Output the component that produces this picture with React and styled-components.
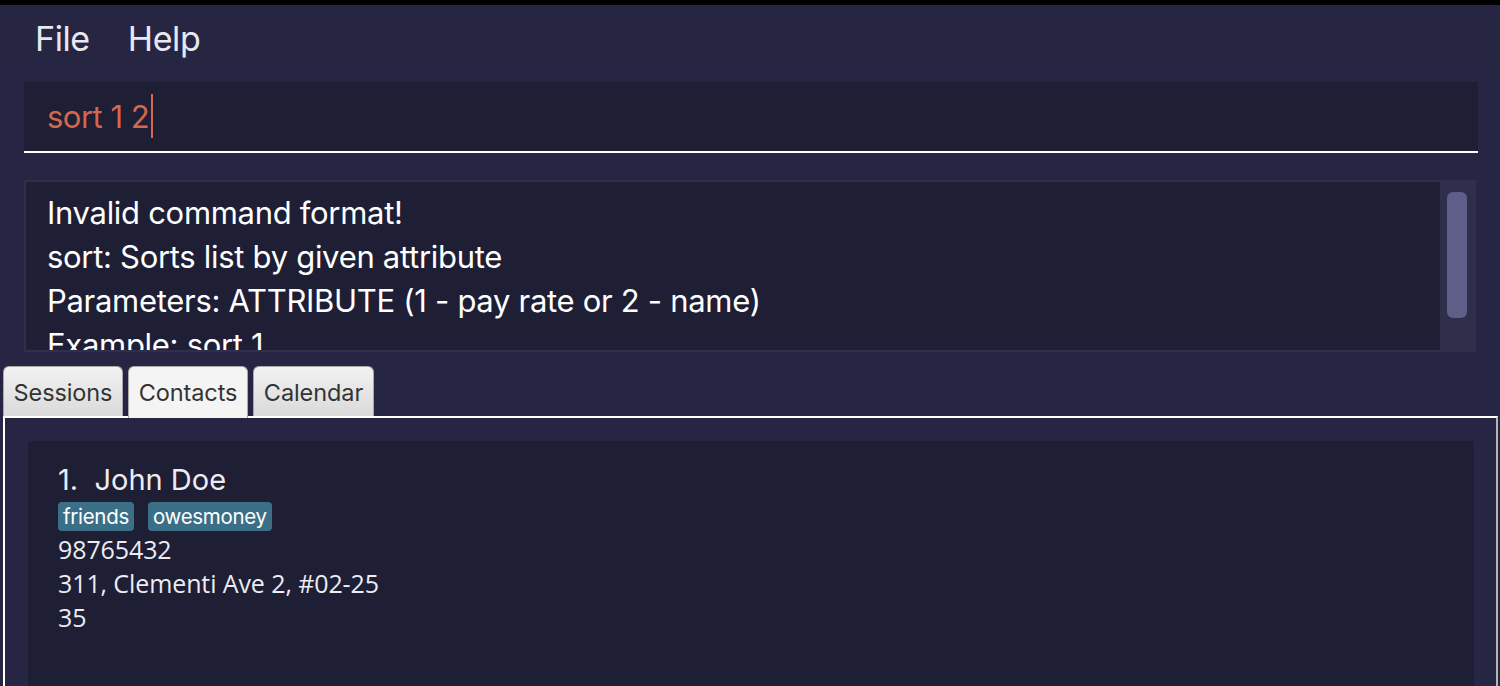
import React from 'react';
import styled, { createGlobalStyle } from 'styled-components';

const GlobalStyle = createGlobalStyle`
  html, body {
    margin: 0;
    padding: 0;
    background: #262644;
    overflow: hidden;
  }
  * {
    box-sizing: border-box;
  }
`;

const Window = styled.div`
  width: 1500px;
  height: 686px;
  display: flex;
  flex-direction: column;
  background: #262644;
  font-family: Inter, "Liberation Sans", sans-serif;
  overflow: hidden;
`;

const TopStrip = styled.div`
  height: 5px;
  background: #000;
  flex-shrink: 0;
`;

const MenuBar = styled.div`
  height: 67px;
  display: flex;
  align-items: center;
  gap: 38px;
  padding-left: 35px;
  background: #262642;
  flex-shrink: 0;
`;

const MenuItem = styled.span`
  font-size: 34px;
  color: #e8e8f0;
  letter-spacing: -0.4px;
`;

const CommandArea = styled.div`
  padding: 10px 22px 0 24px;
  flex-shrink: 0;
`;

const CommandBox = styled.div`
  height: 71px;
  background: #1e1e34;
  border-bottom: 2px solid #ffffff;
  display: flex;
  align-items: center;
  padding-left: 23px;
  padding-bottom: 1px;
`;

const CommandText = styled.span`
  font-size: 31px;
  color: #d4674d;
  letter-spacing: -0.5px;
`;

const Caret = styled.span`
  display: inline-block;
  width: 2px;
  height: 44px;
  background: #d4674d;
  margin-left: 2px;
  vertical-align: middle;
`;

const ResultArea = styled.div`
  padding: 27px 24px 0 24px;
  flex-shrink: 0;
`;

const ResultBox = styled.div`
  height: 172px;
  border: 2px solid #2f2f4c;
  display: flex;
  background: #2f2f4c;
`;

const ResultText = styled.div`
  flex: 1;
  background: #1e1e34;
  padding: 9px 0 0 21px;
  font-size: 31px;
  line-height: 44px;
  color: #ffffff;
  overflow: hidden;
  letter-spacing: -0.3px;
`;

const ScrollTrack = styled.div`
  width: 34px;
  padding: 10px 7px 0 7px;
`;

const ScrollThumb = styled.div`
  height: 126px;
  border-radius: 6px;
  background: #5e5e88;
`;

const TabStrip = styled.div`
  display: flex;
  gap: 5px;
  padding: 14px 0 0 3px;
  height: 64px;
  flex-shrink: 0;
  align-items: flex-end;
`;

const Tab = styled.div`
  width: ${p => p.$w}px;
  height: ${p => (p.$active ? 52 : 50)}px;
  margin-bottom: ${p => (p.$active ? -2 : 0)}px;
  border: 1px solid #a8a8a8;
  border-bottom: none;
  border-radius: 6px 6px 0 0;
  background: ${p => (p.$active ? '#f4f4f4' : 'linear-gradient(#f2f2f2, #dadada)')};
  display: flex;
  align-items: center;
  justify-content: center;
  padding-top: 2px;
  padding-bottom: ${p => (p.$active ? 2 : 0)}px;
  font-size: 23.5px;
  color: #333333;
  letter-spacing: -0.1px;
  position: relative;
  z-index: 1;
`;

const ContentPanel = styled.div`
  flex: 1;
  margin-left: 3px;
  margin-right: 2px;
  border-top: 2px solid #ffffff;
  border-left: 2px solid #ffffff;
  border-right: 2px solid #b4b4b4;
  background: #262644;
  padding: 23px 22px 0 23px;
  display: flex;
`;

const Card = styled.div`
  flex: 1;
  background: #1e1e34;
  padding: 21px 0 0 30px;
  display: flex;
  flex-direction: column;
`;

const Name = styled.div`
  font-size: 29px;
  line-height: 36px;
  color: #ececf2;
  white-space: pre;
`;

const TagRow = styled.div`
  display: flex;
  gap: 14px;
  margin-top: 4px;
`;

const Tag = styled.span`
  height: 29px;
  padding: 0 5px;
  border-radius: 4px;
  background: #3b6f87;
  color: #ffffff;
  font-size: 20.5px;
  line-height: 29px;
  letter-spacing: -0.3px;
`;

const Detail = styled.div`
  font-family: "Open Sans", "Noto Sans", sans-serif;
  font-size: 25px;
  line-height: 34px;
  color: #ececf2;
  letter-spacing: -0.1px;
`;

const DetailList = styled.div`
  margin-top: 1px;
`;

const resultLines = [
  'Invalid command format!',
  'sort: Sorts list by given attribute',
  'Parameters: ATTRIBUTE (1 - pay rate or 2 - name)',
  'Example: sort 1',
];

const tabs = [
  { label: 'Sessions', w: 120 },
  { label: 'Contacts', w: 120, active: true },
  { label: 'Calendar', w: 121 },
];

export default function App() {
  return (
    <>
      <GlobalStyle />
      <Window>
        <TopStrip />
        <MenuBar>
          <MenuItem>File</MenuItem>
          <MenuItem>Help</MenuItem>
        </MenuBar>
        <CommandArea>
          <CommandBox>
            <CommandText>sort 1 2</CommandText>
            <Caret />
          </CommandBox>
        </CommandArea>
        <ResultArea>
          <ResultBox>
            <ResultText>
              {resultLines.map(line => (
                <div key={line}>{line}</div>
              ))}
            </ResultText>
            <ScrollTrack>
              <ScrollThumb />
            </ScrollTrack>
          </ResultBox>
        </ResultArea>
        <TabStrip>
          {tabs.map(t => (
            <Tab key={t.label} $w={t.w} $active={t.active}>
              {t.label}
            </Tab>
          ))}
        </TabStrip>
        <ContentPanel>
          <Card>
            <Name>{'1.  John Doe'}</Name>
            <TagRow>
              <Tag>friends</Tag>
              <Tag>owesmoney</Tag>
            </TagRow>
            <DetailList>
              <Detail>98765432</Detail>
              <Detail>311, Clementi Ave 2, #02-25</Detail>
              <Detail>35</Detail>
            </DetailList>
          </Card>
        </ContentPanel>
      </Window>
    </>
  );
}
